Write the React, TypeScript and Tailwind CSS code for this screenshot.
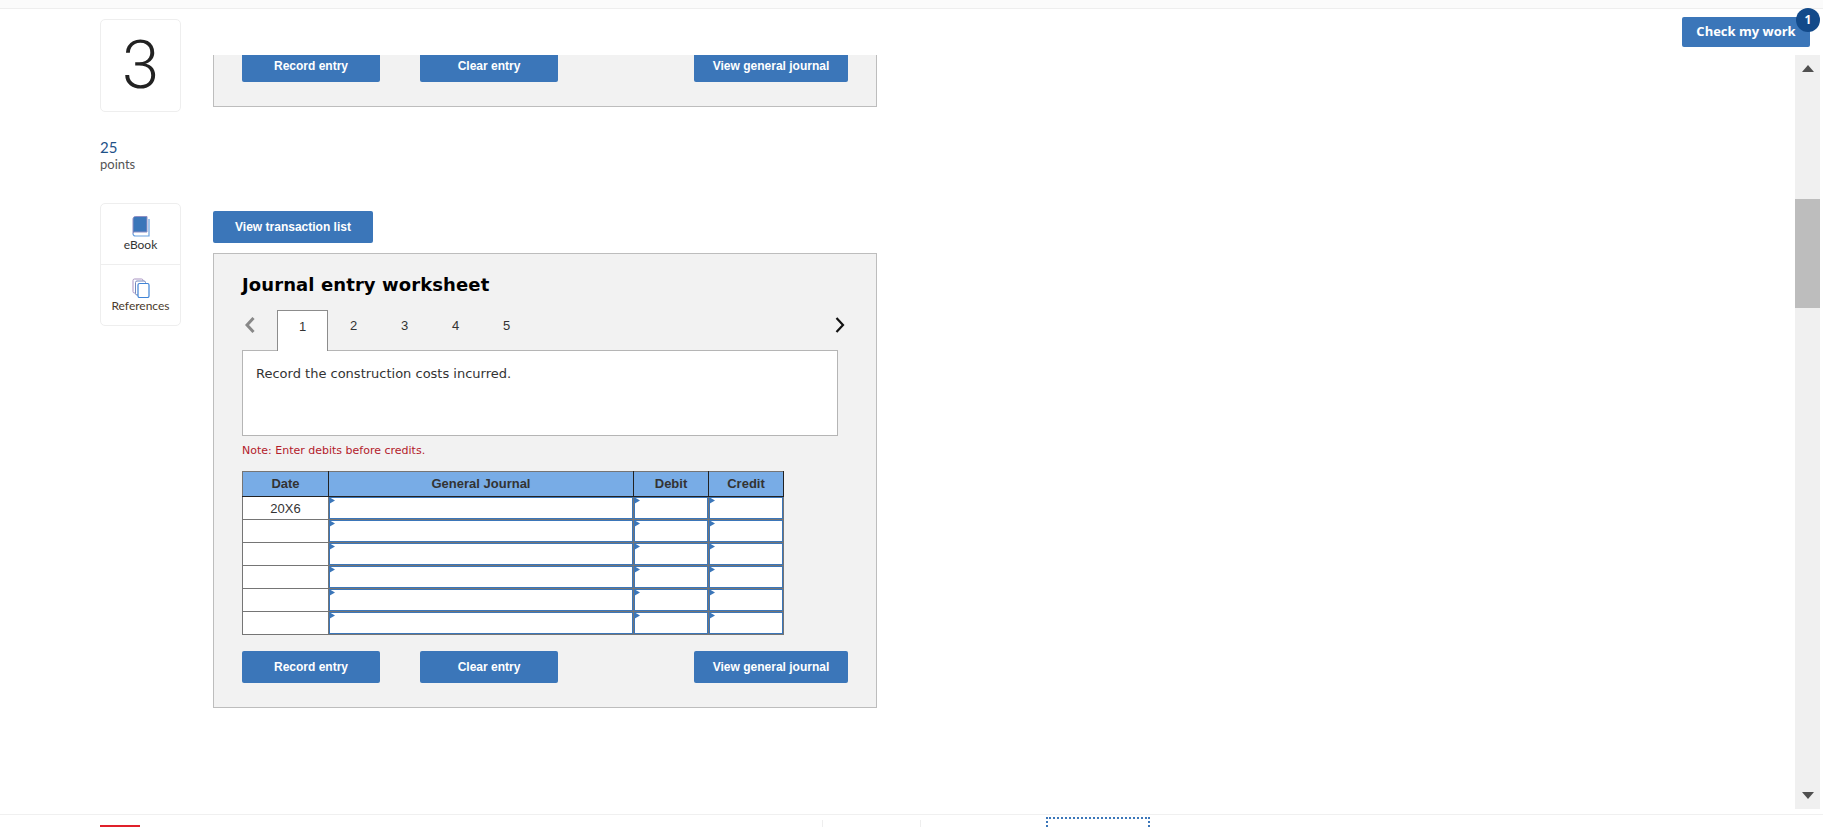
const rows = ['20X6', '', '', '', '', ''];

function ActionButtons() {
  return (
    <div className="flex font-['Liberation_Sans',Arial,sans-serif]">
      <button className="h-[32px] w-[138px] rounded-[2px] bg-[#3b76b9] text-[12px] font-bold text-white">Record entry</button>
      <button className="ml-[40px] h-[32px] w-[138px] rounded-[2px] bg-[#3b76b9] text-[12px] font-bold text-white">Clear entry</button>
      <button className="ml-[136px] h-[32px] w-[154px] rounded-[2px] bg-[#3b76b9] text-[12px] font-bold text-white">View general journal</button>
    </div>
  );
}

function InputCell() {
  return (
    <td className="h-[23px] border border-[#757575] p-0">
      <div className="relative h-[22px] border border-[#3b76b9] bg-white">
        <svg className="absolute left-[-1px] top-[-1px]" width="6" height="7" viewBox="0 0 6 7">
          <path d="M0 0L6 3.5L0 7Z" fill="#3b76b9" />
        </svg>
      </div>
    </td>
  );
}

function JournalTable() {
  return (
    <table className="w-[541px] table-fixed border-collapse font-['Liberation_Sans',Arial,sans-serif] text-[13px] text-[#333]">
      <thead>
        <tr className="h-[25px] bg-[#78ace6]">
          <th className="w-[86px] border border-[#222] border-t-[#757575] border-l-[#757575] font-bold">Date</th>
          <th className="w-[305px] border border-[#222] border-t-[#757575] font-bold">General Journal</th>
          <th className="w-[75px] border border-[#222] border-t-[#757575] font-bold">Debit</th>
          <th className="w-[75px] border border-[#222] border-t-[#757575] font-bold">Credit</th>
        </tr>
      </thead>
      <tbody>
        {rows.map((date, i) => (
          <tr key={i}>
            <td className="h-[23px] border border-[#757575] bg-white p-0 text-center leading-none">{date}</td>
            <InputCell />
            <InputCell />
            <InputCell />
          </tr>
        ))}
      </tbody>
    </table>
  );
}

function Scrollbar() {
  return (
    <div className="flex h-[754px] w-[25px] flex-col items-center bg-[#f0f0f0]">
      <svg className="mt-[10px]" width="12" height="7" viewBox="0 0 12 7">
        <path d="M6 0L12 7H0Z" fill="#505050" />
      </svg>
      <div className="mt-[127px] h-[109px] w-full bg-[#bdbdbd]" />
      <svg className="mt-auto mb-[10px]" width="12" height="7" viewBox="0 0 12 7">
        <path d="M0 0H12L6 7Z" fill="#505050" />
      </svg>
    </div>
  );
}

export default function App() {
  return (
    <div className="flex h-[827px] w-[1823px] flex-col overflow-hidden bg-white">
      <div className="h-[9px] shrink-0 border-b border-[#eeeeee] bg-[#fbfbfb]" />

      <div className="flex h-[805px] shrink-0">
        {/* Left rail */}
        <div className="ml-[100px] w-[81px] shrink-0 pt-[10px] font-['Lato',sans-serif]">
          <div className="flex h-[93px] items-center justify-center rounded-[5px] border border-[#eeeeee] font-['Roboto',sans-serif] text-[67px] font-light text-[#222]">3</div>
          <div className="mt-[26px] text-[15px] leading-[19px] text-[#1f5288]">25</div>
          <div className="text-[13px] leading-[15px] text-[#555]">points</div>
          <div className="mt-[31px] overflow-hidden rounded-[5px] border border-[#eeeeee]">
            <div className="flex h-[61px] flex-col items-center border-b border-[#eeeeee] pt-[12px]">
              <svg width="18" height="21" viewBox="0 0 18 21">
                <path d="M1 3C1 1.5 2 .5 3.5 .5H15V16H3C1.8 16 1 16.6 1 17.5Z" fill="#3b76b9" stroke="#8f8fc4" strokeWidth="1" />
                <path d="M1 17.5C1 19 2 20 3.5 20H17V3" fill="none" stroke="#6aa2e0" strokeWidth="1.2" />
              </svg>
              <span className="mt-[1px] text-[12px] leading-[14px] text-[#333]">eBook</span>
            </div>
            <div className="flex h-[60px] flex-col items-center pt-[13px]">
              <svg width="18" height="20" viewBox="0 0 18 20">
                <rect x="1" y="1" width="10" height="14" rx="1.5" fill="#fff" stroke="#a893c2" />
                <rect x="3.5" y="3" width="10" height="14" rx="1.5" fill="#fff" stroke="#7488bd" />
                <rect x="6" y="5.5" width="11" height="14" rx="1.5" fill="#fff" stroke="#3f84d6" strokeWidth="1.2" />
              </svg>
              <span className="mt-[1px] text-[12px] leading-[14px] text-[#4a3a2c]">References</span>
            </div>
          </div>
        </div>

        {/* Question area */}
        <div className="ml-[32px] flex min-w-0 flex-1 flex-col">
          <div className="flex h-[46px] shrink-0 justify-end pr-[13px] pt-[8px]">
            <div className="relative">
              <button className="h-[30px] w-[128px] rounded-[2px] bg-[#3b76b9] font-['Open_Sans',sans-serif] text-[13px] font-bold text-white">Check my work</button>
              <span className="absolute right-[-10px] top-[-9px] flex h-[24px] w-[24px] items-center justify-center rounded-full bg-[#134a8a] font-['Open_Sans',sans-serif] text-[12px] font-bold text-white">1</span>
            </div>
          </div>

          <div className="flex min-h-0 flex-1">
            <div className="min-w-0 flex-1 overflow-hidden">
              <div className="h-[57px] w-[664px] border border-t-0 border-[#bdbdbd] bg-[#f2f2f2] px-[28px]">
                <div className="mt-[-5px]">
                  <ActionButtons />
                </div>
              </div>

              <button className="mt-[104px] h-[32px] w-[160px] rounded-[2px] bg-[#3b76b9] font-['Liberation_Sans',Arial,sans-serif] text-[12px] font-bold text-white">View transaction list</button>

              <div className="mt-[10px] h-[455px] w-[664px] border border-[#bdbdbd] bg-[#f2f2f2] px-[28px] pt-[19px]">
                <h2 className="font-['DejaVu_Sans',Verdana,sans-serif] text-[18px] font-bold leading-[24px] tracking-[0.1px] text-black">Journal entry worksheet</h2>

                <div className="mt-[13px] flex h-[41px] items-center font-['Liberation_Sans',Arial,sans-serif] text-[13px] text-[#333]">
                  <svg className="mb-[11px] ml-[3px]" width="10" height="16" viewBox="0 0 10 16">
                    <path d="M8.5 1L2 8L8.5 15" fill="none" stroke="#888" strokeWidth="3" />
                  </svg>
                  <div className="relative z-10 ml-[22px] flex h-[41px] w-[51px] items-center justify-center border border-b-0 border-[#8c8c8c] bg-white pb-[9px]">1</div>
                  <div className="flex w-[51px] justify-center pb-[9px]">2</div>
                  <div className="flex w-[51px] justify-center pb-[9px]">3</div>
                  <div className="flex w-[51px] justify-center pb-[9px]">4</div>
                  <div className="flex w-[51px] justify-center pb-[9px]">5</div>
                  <svg className="mb-[11px] ml-auto mr-[3px]" width="10" height="16" viewBox="0 0 10 16">
                    <path d="M1.5 1L8 8L1.5 15" fill="none" stroke="#111" strokeWidth="2.2" />
                  </svg>
                </div>

                <div className="mt-[-1px] h-[86px] w-[596px] border border-[#b5b5b5] bg-white px-[13px] pt-[14px] font-['DejaVu_Sans',Verdana,sans-serif] text-[13px] leading-[18px] text-[#333]">
                  Record the construction costs incurred.
                </div>

                <p className="mt-[8px] font-['DejaVu_Sans',Verdana,sans-serif] text-[11px] leading-[14px] text-[#b3202a]">Note: Enter debits before credits.</p>

                <div className="mt-[13px]">
                  <JournalTable />
                </div>

                <div className="mt-[16px]">
                  <ActionButtons />
                </div>
              </div>
            </div>
            <div className="mr-[3px] shrink-0">
              <Scrollbar />
            </div>
          </div>
        </div>
      </div>

      {/* Footer, cut off by the window */}
      <div className="flex h-[13px] shrink-0 items-start overflow-hidden border-t border-[#f0f0f0] pl-[100px]">
        <div className="mt-[10px] h-[2px] w-[40px] bg-[#e0202a]" />
        <div className="ml-[682px] mt-[5px] h-[7px] w-px bg-[#eeeeee]" />
        <div className="ml-[97px] mt-[5px] h-[7px] w-px bg-[#eeeeee]" />
        <div className="ml-[125px] mt-[2px] h-[14px] w-[104px] shrink-0 border-2 border-dotted border-[#3b76b9]" />
      </div>
    </div>
  );
}
